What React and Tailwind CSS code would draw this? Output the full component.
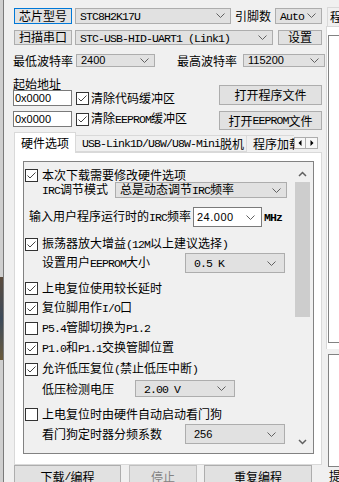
import React from 'react';

const CJK = /[\u2e80-\u9fff\uff00-\uffef]/;

// latin runs look like the old bitmap font: narrow serif mono
const mix = (s) =>
  s
    .split(/([\u2e80-\u9fff\uff00-\uffef]+)/)
    .filter(Boolean)
    .map((p, i) =>
      CJK.test(p) ? (
        <span key={i}>{p}</span>
      ) : (
        <span key={i} className="font-['Liberation_Mono',monospace] text-[11.5px] tracking-[-0.9px] whitespace-pre">
          {p}
        </span>
      )
    );

const Chevron = () => (
  <svg width="9" height="5" viewBox="0 0 9 5" className="shrink-0">
    <path d="M0.5 0.5 L4.5 4.5 L8.5 0.5" fill="none" stroke="#606060" strokeWidth="1" />
  </svg>
);

const Combo = ({ className, children, sans }) => (
  <div className={`flex items-center justify-between pl-[4px] pr-[5px] border border-[#adadad] bg-[#e1e1e1] whitespace-nowrap ${className}`}>
    <span className={sans ? "font-['Liberation_Sans',sans-serif] text-[11px]" : ''}>{children}</span>
    <Chevron />
  </div>
);

const Btn = ({ className, children }) => (
  <div className={`flex items-center justify-center border bg-[#e1e1e1] whitespace-nowrap ${className}`}>{children}</div>
);

const Check = ({ on }) => (
  <span className="w-[13px] h-[13px] border border-[#333333] bg-white flex items-center justify-center shrink-0">
    {on && (
      <svg width="11" height="11" viewBox="0 0 11 11">
        <path d="M1.5 5.5 L4 8 L9.5 2.5" fill="none" stroke="#444444" strokeWidth="1" />
      </svg>
    )}
  </span>
);

const CheckRow = ({ on, text, className = '' }) => (
  <div className={`flex items-center gap-[4px] pl-[1px] whitespace-nowrap ${className}`}>
    <Check on={on} />
    <span>{mix(text)}</span>
  </div>
);

const Arrow = ({ up }) => (
  <svg width="9" height="6" viewBox="0 0 9 6">
    <path d={up ? 'M1 5 L4.5 1.5 L8 5' : 'M1 1 L4.5 4.5 L8 1'} fill="none" stroke="#606060" strokeWidth="1.5" />
  </svg>
);

export default function App() {
  return (
    <div className="w-[339px] h-[482px] overflow-hidden bg-[#f0f0f0] flex text-[12px] leading-none text-black font-['Noto_Sans_CJK_SC',sans-serif]">
      {/* edge of the window behind */}
      <div className="w-[4px] shrink-0 flex flex-col border-r border-[#7a7a7a]">
        <div className="h-[277px] bg-[#cfcfcf]" />
        <div className="h-[83px] bg-gradient-to-b from-[#5b4b3c] via-[#3c4a5a] to-[#6a5a3a]" />
        <div className="flex-1 bg-[#cfcfcf]" />
      </div>

      {/* main settings column */}
      <div className="w-[321px] shrink-0 pl-[9px] flex flex-col">
        <div className="mt-[8px] h-[17px] flex items-center">
          <Btn className="ml-[1px] w-[58px] h-full border-[#0078d7]">芯片型号</Btn>
          <Combo className="ml-[3px] w-[156px] h-full">{mix('STC8H2K17U')}</Combo>
          <span className="ml-[4px] w-[36px]">引脚数</span>
          <Combo className="ml-[4px] w-[47px] h-full pl-[3px]">{mix('Auto')}</Combo>
        </div>

        <div className="mt-[6px] h-[17px] flex items-center">
          <Btn className="ml-[1px] w-[58px] h-full border-[#adadad]">扫描串口</Btn>
          <Combo className="ml-[3px] w-[198px] h-full">{mix('STC-USB-HID-UART1 (Link1)')}</Combo>
          <Btn className="ml-[5px] w-[44px] h-full border-[#adadad]">设置</Btn>
        </div>

        <div className="mt-[9px] h-[18px] flex items-center">
          <span className="w-[63px]">最低波特率</span>
          <Combo className="w-[79px] h-full" sans>2400</Combo>
          <span className="ml-[22px] w-[66px]">最高波特率</span>
          <Combo className="w-[82px] h-full" sans>115200</Combo>
        </div>

        <div className="flex">
          <div className="flex flex-col">
            <div className="mt-[10px] h-[13px] flex items-center">起始地址</div>
            <div className="h-[16px] flex items-center">
              <div className="w-[59px] h-full border border-[#7a7a7a] bg-white pl-[1px] flex items-center font-['Liberation_Sans',sans-serif] text-[11px]">0x0000</div>
              <div className="ml-[4px] flex items-center gap-[2px] whitespace-nowrap">
                <Check on />
                <span>清除代码缓冲区</span>
              </div>
            </div>
            <div className="mt-[5px] h-[16px] flex items-center">
              <div className="w-[59px] h-full border border-[#7a7a7a] bg-white pl-[1px] flex items-center font-['Liberation_Sans',sans-serif] text-[11px]">0x0000</div>
              <div className="ml-[4px] flex items-center gap-[2px] whitespace-nowrap">
                <Check on />
                <span>{mix('清除EEPROM缓冲区')}</span>
              </div>
            </div>
          </div>
          <div className="ml-auto mr-[3px] flex flex-col">
            <Btn className="mt-[18px] w-[103px] h-[20px] border-[#adadad]">打开程序文件</Btn>
            <Btn className="mt-[6px] w-[103px] h-[19px] border-[#adadad]">{mix('打开EEPROM文件')}</Btn>
          </div>
        </div>

        {/* tab strip */}
        <div className="mt-[2px] ml-[1px] w-[308px] h-[20px] flex items-end">
          <div className="relative z-10 mb-[-1px] w-[62px] h-[21px] bg-white border border-b-0 border-[#d9d9d9] flex items-center justify-center">
            硬件选项
          </div>
          <div className="w-[171px] h-[17px] border border-l-0 border-[#d9d9d9] pl-[6px] flex items-center whitespace-nowrap">
            {mix('USB-Link1D/U8W/U8W-Mini脱机')}
          </div>
          <div className="flex-1 min-w-0 h-[17px] border-t border-[#d9d9d9] pl-[6px] flex items-center whitespace-nowrap overflow-hidden">
            程序加载
          </div>
          <div className="self-start mt-[5px] mr-[4px] flex">
            <div className="w-[12px] h-[12px] border border-[#adadad] bg-[#f7f7f7] flex items-center justify-center">
              <svg width="4" height="6" viewBox="0 0 4 6"><path d="M3.5 0 L0.5 3 L3.5 6 Z" fill="#000" /></svg>
            </div>
            <div className="w-[12px] h-[12px] border border-l-0 border-[#adadad] bg-[#f7f7f7] flex items-center justify-center">
              <svg width="4" height="6" viewBox="0 0 4 6"><path d="M0.5 0 L3.5 3 L0.5 6 Z" fill="#000" /></svg>
            </div>
          </div>
        </div>

        {/* tab page */}
        <div className="ml-[1px] w-[308px] h-[313px] border border-[#d9d9d9] bg-white pt-[8px] pl-[8px] pr-[7px] pb-[10px]">
          <div className="h-[293px] border border-[#828282] bg-[#f0f0f0] flex">
            <div className="flex-1 min-w-0 flex flex-col">
              <CheckRow on className="mt-[6px] h-[14px]" text="本次下载需要修改硬件选项" />
              <div className="h-[16px] pl-[18px] flex items-center">
                <span className="w-[73px]">{mix('IRC调节模式')}</span>
                <Combo className="w-[172px] h-full">{mix('总是动态调节IRC频率')}</Combo>
              </div>
              <div className="mt-[9px] h-[20px] pl-[5px] flex items-center whitespace-nowrap">
                <span className="w-[164px]">{mix('输入用户程序运行时的IRC频率')}</span>
                <div className="w-[69px] h-full border border-[#7a7a7a] bg-white pl-[3px] pr-[6px] flex items-center justify-between">
                  <span className="font-['Liberation_Sans',sans-serif] text-[11px] tracking-[0.5px]">24.000</span>
                  <Chevron />
                </div>
                <span className="ml-[2px] font-bold">{mix('MHz')}</span>
              </div>
              <CheckRow on className="mt-[10px] h-[14px]" text="振荡器放大增益(12M以上建议选择)" />
              <div className="mt-[2px] h-[20px] pl-[18px] flex items-center">
                <span className="w-[143px]">{mix('设置用户EEPROM大小')}</span>
                <Combo className="w-[100px] h-full pl-[8px] pr-[8px]">{mix('0.5 K')}</Combo>
              </div>
              <CheckRow on className="mt-[5px] h-[20px]" text="上电复位使用较长延时" />
              <CheckRow on className="h-[20px]" text="复位脚用作I/O口" />
              <CheckRow className="h-[20px]" text="P5.4管脚切换为P1.2" />
              <CheckRow on className="h-[20px]" text="P1.0和P1.1交换管脚位置" />
              <CheckRow on className="mt-[1px] h-[20px]" text="允许低压复位(禁止低压中断)" />
              <div className="mt-[1px] h-[17px] pl-[18px] flex items-center">
                <span className="w-[93px]">低压检测电压</span>
                <Combo className="w-[100px] h-full pl-[8px] pr-[8px]">{mix('2.00 V')}</Combo>
              </div>
              <CheckRow className="mt-[7px] h-[20px]" text="上电复位时由硬件自动启动看门狗" />
              <div className="h-[20px] pl-[18px] flex items-center">
                <span className="w-[143px]">看门狗定时器分频系数</span>
                <Combo className="w-[100px] h-full pl-[8px] pr-[8px]" sans>256</Combo>
              </div>
            </div>
            {/* scrollbar */}
            <div className="w-[17px] mr-[2px] pt-[3px] pb-[3px] flex flex-col">
              <div className="h-[17px] flex items-center justify-center"><Arrow up /></div>
              <div className="h-[135px] mx-[1px] bg-[#cdcdcd]" />
              <div className="flex-1" />
              <div className="h-[17px] flex items-center justify-center"><Arrow /></div>
            </div>
          </div>
        </div>

        {/* bottom buttons */}
        <div className="h-[24px] flex shrink-0">
          <Btn className="ml-[1px] w-[107px] h-full border-[#adadad]">{mix('下载/编程')}</Btn>
          <Btn className="ml-[8px] w-[68px] h-full border-[#bfbfbf] bg-[#cccccc] text-[#838383]">停止</Btn>
          <Btn className="ml-[7px] w-[108px] h-full border-[#adadad]">重复编程</Btn>
        </div>
      </div>

      {/* right column, cut off by the window edge */}
      <div className="w-[14px] shrink-0 flex flex-col overflow-hidden">
        <div className="mt-[7px] ml-[2px] h-[19px] border border-r-0 border-b-0 border-[#d9d9d9] bg-[#f0f0f0] pl-[2px] flex items-center whitespace-nowrap">
          程序
        </div>
        <div className="ml-[1px] h-[324px] border-l border-t border-[#d9d9d9] bg-white pt-[8px] pl-[1px]">
          <div className="h-[308px] border-l border-t border-b border-[#828282] bg-white" />
        </div>
        <div className="mt-[5px] ml-[3px] h-[113px] border-l border-t border-b border-[#828282] bg-white" />
        <div className="mt-[3px] ml-[4px] whitespace-nowrap">提示</div>
      </div>
    </div>
  );
}
